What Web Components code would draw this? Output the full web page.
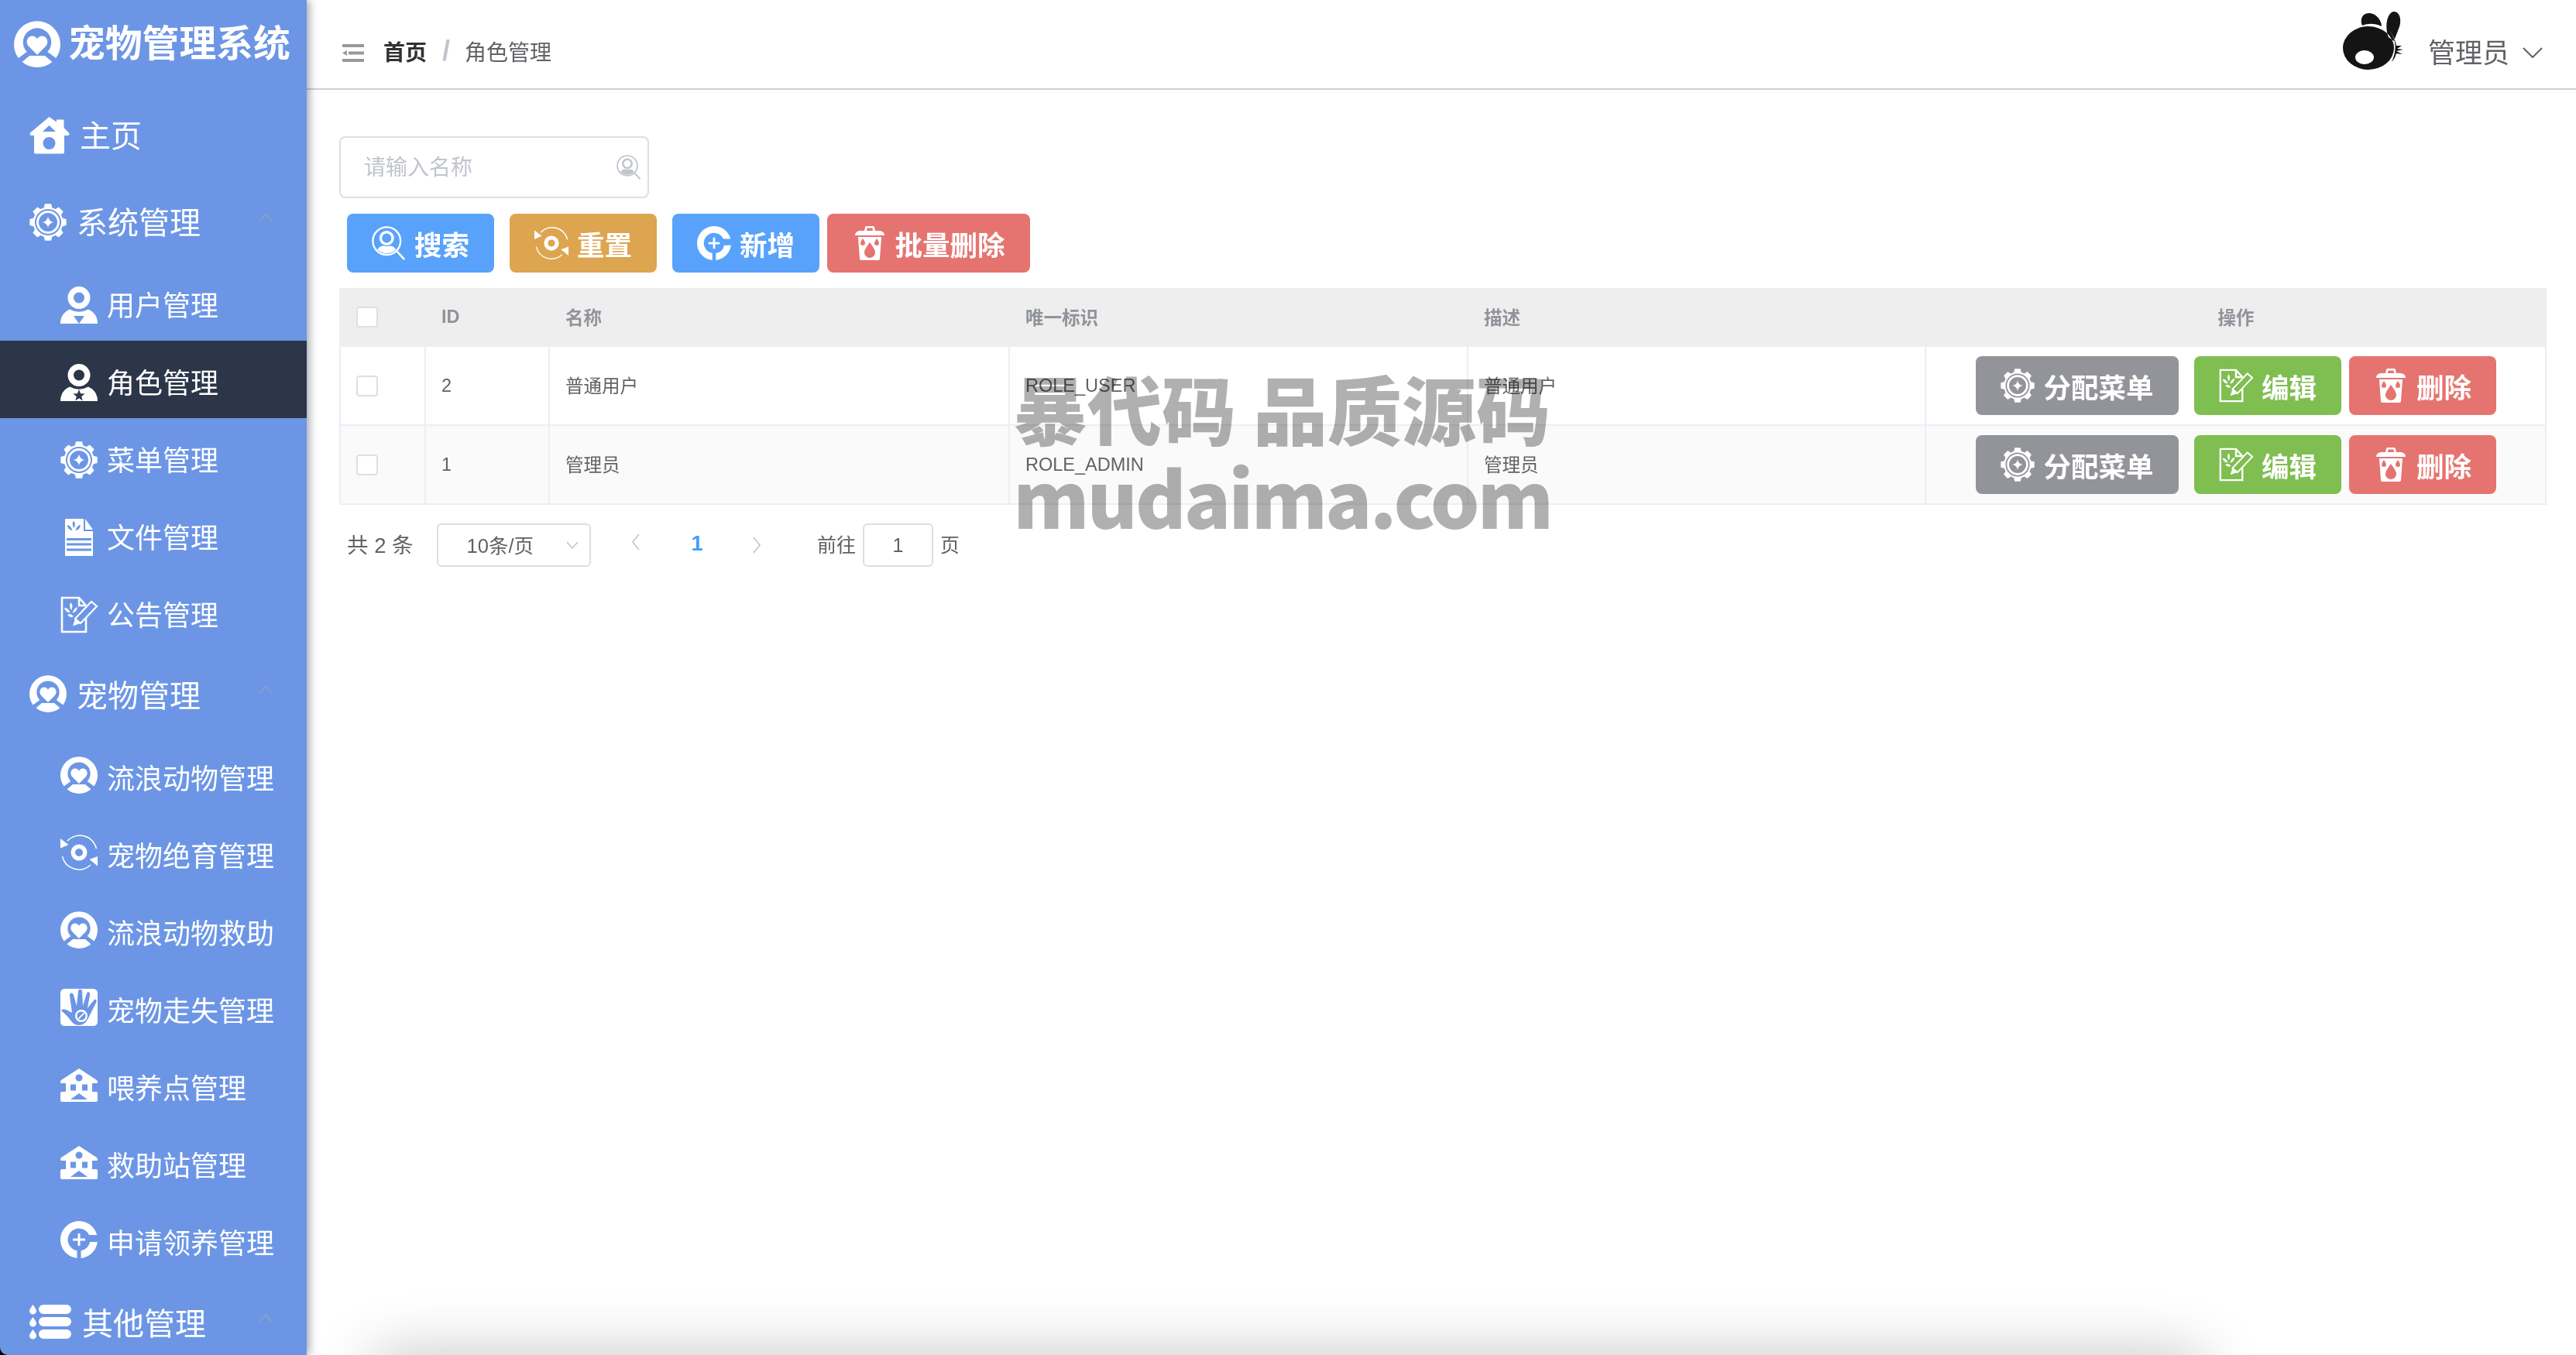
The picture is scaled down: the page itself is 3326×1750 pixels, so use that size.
<!DOCTYPE html>
<html lang="zh">
<head>
<meta charset="utf-8">
<title>宠物管理系统</title>
<style>
    html, body { margin: 0; height: 100%; overflow: hidden; background: #fff; }
    body { font-family: "Liberation Sans", "Noto Sans CJK SC", sans-serif; }
</style>
</head>
<body>
<pet-app>
    <side-nav slot="side" title="宠物管理系统">
        <nav-item icon="home" iw="52" ih="48" gap="13" top>主页</nav-item>
        <nav-item icon="gear" group style="height:109px;padding-top:3px">系统管理</nav-item>
        <nav-item icon="user" sub style="--nudge:4px">用户管理</nav-item>
        <nav-item icon="role" sub active style="--nudge:4px">角色管理</nav-item>
        <nav-item icon="gear" sub style="--nudge:4px">菜单管理</nav-item>
        <nav-item icon="file" sub style="--nudge:4px">文件管理</nav-item>
        <nav-item icon="edit" sub style="--nudge:4px">公告管理</nav-item>
        <nav-item icon="pet" group style="height:111px;--lift:0px">宠物管理</nav-item>
        <nav-item icon="pet" sub>流浪动物管理</nav-item>
        <nav-item icon="cycle" sub>宠物绝育管理</nav-item>
        <nav-item icon="pet" sub>流浪动物救助</nav-item>
        <nav-item icon="lost" sub>宠物走失管理</nav-item>
        <nav-item icon="shop" sub ih="43">喂养点管理</nav-item>
        <nav-item icon="shop" sub ih="43">救助站管理</nav-item>
        <nav-item icon="adopt" sub>申请领养管理</nav-item>
        <nav-item icon="list" iw="54" ih="45" gap="14" group style="height:112px;--lift:0px">其他管理</nav-item>
    </side-nav>

    <top-bar current="角色管理" user="管理员"></top-bar>

    <page-content>
        <search-box placeholder="请输入名称"></search-box>
        <tool-bar>
            <tool-button icon="search" color="#58a2fb" style="margin-right:10px">搜索</tool-button>
            <tool-button icon="cycle" color="#dda550" style="margin-right:10px">重置</tool-button>
            <tool-button icon="adopt" color="#58a2fb">新增</tool-button>
            <tool-button icon="trash" color="#e57470" style="width:262px">批量删除</tool-button>
        </tool-bar>
        <role-table>
            <role-row head></role-row>
            <role-row rid="2" name="普通用户" flag="ROLE_USER" desc="普通用户"></role-row>
            <role-row rid="1" name="管理员" flag="ROLE_ADMIN" desc="管理员" stripe></role-row>
        </role-table>
        <page-nav></page-nav>
    </page-content>

    <water-mark></water-mark>
</pet-app>

<script>
// icons are plain strings, <use> can't cross shadow roots
function gearPath() {
    let d = '';
    const teeth = 8;
    for (let i = 0; i < teeth; i++) {
        const a = (i / teeth) * Math.PI * 2 - Math.PI / 2;
        const pts = [[-0.27, 19.5], [-0.17, 24], [0.17, 24], [0.27, 19.5]];
        pts.forEach(([o, r]) => {
            const x = 24 + Math.cos(a + o) * r;
            const y = 24 + Math.sin(a + o) * r;
            d += (d ? 'L' : 'M') + x.toFixed(2) + ' ' + y.toFixed(2);
        });
    }
    return d + 'Z';
}

function circle(cx, cy, r) {
    return `M${cx - r} ${cy}a${r} ${r} 0 1 0 ${r * 2} 0a${r} ${r} 0 1 0 ${-r * 2} 0Z`;
}

function star(cx, cy, r) {
    let d = '';
    for (let i = 0; i < 10; i++) {
        const a = (i / 10) * Math.PI * 2 - Math.PI / 2;
        const rr = i % 2 ? r * 0.42 : r;
        d += (d ? 'L' : 'M') + (cx + Math.cos(a) * rr).toFixed(2) + ' ' + (cy + Math.sin(a) * rr).toFixed(2);
    }
    return d + 'Z';
}

const solid = d => `<path fill="currentColor" fill-rule="evenodd" d="${d}"/>`;
const line = (d, w) => `<path fill="none" stroke="currentColor" stroke-width="${w}" d="${d}"/>`;

const ICONS = {
    pet: ['0 0 48 48', solid(
        'M4.6 38.4A24 24 0 1 1 43.4 38.4L34.7 32A14.6 14.6 0 1 0 13.3 32Z' +
        'M8.5 42.3A24 24 0 0 0 39.5 42.3L32 36H16Z' +
        'M24 35L15 26C11.5 21.5 14 15.5 19 15.5C21.5 15.5 23 17 24 18.5C25 17 26.5 15.5 29 15.5C34 15.5 36.5 21.5 33 26Z')],
    home: ['0 0 52 48', solid(
        'M25.5 0L35 6.5V3.5H44.5V14L51 20.5C52.5 22.5 51 24 49 24H45V45.5Q45 47.5 43 47.5H8Q6 47.5 6 45.5V24H3C1 24 0 22.5 1 20.5Z' +
        'M25.5 11L17 19H34Z' + circle(25.5, 34, 8))],
    gear: ['0 0 48 48', solid(gearPath() + circle(24, 24, 17) + circle(24, 24, 15) + circle(24, 24, 12) +
        'M24 16.5Q25 23 31.5 24Q25 25 24 31.5Q23 25 16.5 24Q23 23 24 16.5Z')],
    user: ['0 0 48 48', solid(circle(24, 14.5, 14.5) + circle(24, 14.5, 7) +
        'M0 48Q0 35 12 29.5Q24 36 36 29.5Q48 35 48 48ZM17 38H31L24 48Z')],
    role: ['0 0 48 48', solid(circle(24, 14.5, 14.5) + circle(24, 14.5, 7) +
        'M0 48Q0 35 12 29.5Q24 36 36 29.5Q48 35 48 48Z' + star(24, 41, 8))],
    file: ['0 0 48 48', solid(
        'M6 0H30V16H42V48H6Z M32 0L42 14H32Z' +
        'M17 2.5Q20.5 6 17.5 12Q14 7 17 2.5ZM8.5 8Q13 8 15.5 15Q10 15 8.5 8ZM26 8Q21.5 8 19.5 15Q25 15 26 8Z' +
        'M8 25H40V28H8ZM8 31.5H40V34.5H8ZM8 38.5H40V41.5H8Z')],
    edit: ['0 0 48 48',
        line('M33 28V46H2V2H24L33 12M24 2V12H33', 2.6) +
        solid('M13.5 8Q17 12 14 18Q10.5 13 13.5 8ZM5 15Q10 14.5 12.5 21Q7 21.5 5 15ZM22 14Q18 14.5 15.5 21.5Q21 21 22 14ZM9 24Q13 21 17 26Q13 29 9 24Z') +
        line('M19 29L40 7L47 13L26 35Z', 2.2) + solid('M16 38.5L19 29L26 35Z')],
    cycle: ['0 0 48 48',
        solid(circle(24, 24, 10.5) + circle(24, 24, 5)) +
        line('M9 9A22 22 0 0 1 46.5 19M2.5 29A22 22 0 0 0 39 40', 1.5) +
        solid('M0 6V18.5L10.5 14ZM48 29V41.5L37.5 33Z')],
    lost: ['0 0 48 48', solid(
        'M6 0H42Q48 0 48 6V42Q48 48 42 48H6Q0 48 0 42V6Q0 0 6 0Z' +
        'M1 28C4 25 8 27 15 31L12 9C11 5 16 4 17 8L21 22L23 3C23 0 28 0 28 3L29 22L34 6C35 3 39 4 38 8L35 25L43 15C45 12 48 15 46 18L36 38C33 44 29 47 24 47C17 47 14 42 11 38C8 34 4 31 1 28Z' +
        circle(27, 35, 8) + circle(27, 35, 5.6) + 'M22.8 38L30 30.8L31.2 32L24 39.2Z')],
    shop: ['0 0 48 43', solid(
        'M24 0L47 15Q49 18 47 19H41V30H46Q48 30 48 32V41Q48 43 46 43H2Q0 43 0 41V32Q0 30 2 30H7V19H1Q-1 18 1 15Z' +
        circle(24, 12, 4.5) + 'M13 20.5H20V28.5H13ZM28 20.5H35V28.5H28ZM24 32L13 40H35Z')],
    adopt: ['0 0 48 48', solid(
        'M47.2 18A24 24 0 1 0 21.5 47.9V38.2A14.4 14.4 0 1 1 37 18Z' +
        'M26.5 47.9A24 24 0 0 0 47.8 27H38.2A14.4 14.4 0 0 1 26.5 38.2Z' +
        'M22.5 16H25.5V22.5H32V25.5H25.5V32H22.5V25.5H16V22.5H22.5Z')],
    list: ['0 0 54 45', solid(
        'M4.5 0Q9 6 9 8A4.5 4.5 0 0 1 0 8Q0 6 4.5 0ZM4.5 16Q9 22 9 24A4.5 4.5 0 0 1 0 24Q0 22 4.5 16ZM4.5 32Q9 38 9 40A4.5 4.5 0 0 1 0 40Q0 38 4.5 32Z' +
        'M18 0H48A6 6 0 0 1 48 12H18A6 6 0 0 1 18 0ZM18 16H48A6 6 0 0 1 48 28H18A6 6 0 0 1 18 16ZM18 32H48A6 6 0 0 1 48 44H18A6 6 0 0 1 18 32Z')],
    search: ['0 0 48 48',
        line(circle(21, 21, 19.5), 2.6) + line(circle(21, 17, 8.5), 3.8) +
        solid('M8 33Q12 26 21 28.5Q30 26 34 33Q28 38.5 21 38.5Q14 38.5 8 33Z') + line('M35 35L46 47', 2.8)],
    trash: ['0 0 38 44', solid(
        'M0 12Q0 7 6 6H12L13 1.5Q13 0 15 0H23Q25 0 25 1.5L26 6H32Q38 7 38 12ZM15.5 2.5L15 6H23L22.5 2.5Z' +
        'M4 14H34L32 42Q32 44 30 44H8Q6 44 6 42Z' +
        'M19 21Q26 30 26 34A7 7 0 0 1 12 34Q12 30 19 21Z' +
        'M10 16Q13 20 13 22A3 3 0 0 1 7 22Q7 20 10 16ZM28 16Q31 20 31 22A3 3 0 0 1 25 22Q25 20 28 16Z')],
    fold: ['0 0 28 23', solid('M0 0H28V4H0ZM8 9.5H28V13.5H8ZM0 11.5L6 8V15ZM0 19H28V23H0Z')],
    rabbit: ['0 0 78 76', solid(
        'M25 18C21 8 27 1 35 2C44 3 50 12 50 19C41 15 33 15 25 18Z' +
        'M59 33C54 22 56 3 65 0C75 -1 76 14 72 22C70 28 68 32 66 38Z' +
        'M33 19A33 28 0 1 1 33 75A33 28 0 1 1 33 19Z' +
        'M28 50A12 9 0 1 1 28 68A12 9 0 1 1 28 50Z' +
        'M60 25C69 35 70 50 63 65C66 62 68 58 69 54L77 55L69 51L78 49L70 48L76 44L69 44C68 38 65 30 60 25Z')]
};

class PetIcon extends HTMLElement {
    connectedCallback() {
        const [box, body] = ICONS[this.getAttribute('name')];
        const w = this.getAttribute('w') || 48;
        const h = this.getAttribute('h') || 48;
        this.attachShadow({ mode: 'open' }).innerHTML = `
            <style>
                :host { display: inline-flex; flex: none; width: ${w}px; height: ${h}px; color: inherit; }
                svg { width: 100%; height: 100%; display: block; overflow: visible; }
            </style>
            <svg viewBox="${box}">${body}</svg>`;
    }
}
customElements.define('pet-icon', PetIcon);

class PetApp extends HTMLElement {
    constructor() {
        super();
        this.attachShadow({ mode: 'open' }).innerHTML = `
            <style>
                :host { display: flex; height: 1750px; width: 3326px; position: relative; overflow: hidden; background: #000; }
                .side { flex: none; display: flex; position: relative; z-index: 2; }
                .main { flex: 1; min-width: 0; background: #fff; display: flex; flex-direction: column; }
            </style>
            <div class="side"><slot name="side"></slot></div>
            <div class="main"><slot></slot></div>`;
    }
}
customElements.define('pet-app', PetApp);

class SideNav extends HTMLElement {
    connectedCallback() {
        this.attachShadow({ mode: 'open' }).innerHTML = `
            <style>
                :host {
                    display: block; width: 396px; height: 1750px; overflow: hidden;
                    background: #6c96e5; color: #fff;
                    border-bottom-left-radius: 10px;
                    box-shadow: 3px 0 12px rgba(0, 21, 41, 0.4);
                }
                .logo {
                    height: 119px; padding-left: 18px; box-sizing: border-box;
                    display: flex; align-items: center; gap: 10px;
                    font-size: 47.8px; font-weight: 700; white-space: nowrap;
                    padding-bottom: 6px;
                }
                .logo span { position: relative; top: -4px; }
            </style>
            <div class="logo"><pet-icon name="pet" w="60" h="60"></pet-icon><span>${this.getAttribute('title')}</span></div>
            <slot></slot>`;
    }
}
customElements.define('side-nav', SideNav);

class NavItem extends HTMLElement {
    connectedCallback() {
        const sub = this.hasAttribute('sub');
        const group = this.hasAttribute('group');
        const iw = this.getAttribute('iw') || 48;
        const ih = this.getAttribute('ih') || 48;
        const gap = this.getAttribute('gap') || (sub ? 12 : 13);
        this.attachShadow({ mode: 'open' }).innerHTML = `
            <style>
                :host {
                    display: flex; align-items: center; box-sizing: border-box; position: relative;
                    height: ${sub ? 100 : 112}px; padding-left: ${sub ? 78 : 38}px; gap: ${gap}px;
                    font-size: ${sub ? 36 : 40}px; white-space: nowrap;
                    background: ${this.hasAttribute('active') ? '#2b3648' : 'transparent'};
                }
                span { position: relative; top: ${sub ? '2px' : 'calc(0px - var(--lift, 2px))'}; }
                pet-icon { position: relative; top: var(--nudge, 0px); }
                svg.up { position: absolute; right: 44px; top: 50%; margin-top: -10px; width: 18px; height: 10px; }
            </style>
            <pet-icon name="${this.getAttribute('icon')}" w="${iw}" h="${ih}"></pet-icon>
            <span><slot></slot></span>
            ${group ? '<svg class="up" viewBox="0 0 18 10"><path d="M1 9.5L9 1L17 9.5" fill="none" stroke="#98a2b3" stroke-width="1.2"/></svg>' : ''}`;
    }
}
customElements.define('nav-item', NavItem);

class TopBar extends HTMLElement {
    connectedCallback() {
        this.attachShadow({ mode: 'open' }).innerHTML = `
            <style>
                :host {
                    display: flex; align-items: center; flex: none; height: 116px; box-sizing: border-box;
                    border-bottom: 2px solid #d0d0d0; padding: 0 43px 0 46px;
                }
                .fold { color: #999; margin-right: 25px; margin-top: 23px; }
                .crumb { display: flex; align-items: center; font-size: 28px; color: #606266; margin-top: 17px; }
                .crumb b { color: #303133; font-weight: 700; }
                .crumb i { font-style: normal; font-weight: 700; font-size: 36px; line-height: 1; color: #c0c4cc; margin: 0 19px 0 20px; }
                .right { margin-left: auto; display: flex; align-items: center; color: #606266; }
                .right span { font-size: 35px; margin: 17px 17px 0 32px; }
                svg.down { width: 26px; height: 14px; margin-top: 22px; }
                .avatar { color: #141414; margin-top: -8px; }
            </style>
            <pet-icon class="fold" name="fold" w="28" h="23"></pet-icon>
            <div class="crumb"><b>首页</b><i>/</i><span>${this.getAttribute('current')}</span></div>
            <div class="right">
                <pet-icon class="avatar" name="rabbit" w="78" h="76"></pet-icon>
                <span>${this.getAttribute('user')}</span>
                <svg class="down" viewBox="0 0 26 14"><path d="M1 1L13 13L25 1" fill="none" stroke="#606266" stroke-width="2"/></svg>
            </div>`;
    }
}
customElements.define('top-bar', TopBar);

class PageContent extends HTMLElement {
    constructor() {
        super();
        this.attachShadow({ mode: 'open' }).innerHTML = `
            <style>
                :host { display: flex; flex-direction: column; align-items: stretch; padding: 60px 38px 0 42px; flex: 1; position: relative; }
                /* shadow of a card that sits just under the fold */
                .under {
                    position: absolute; left: 87px; width: 2359px; top: 1634px; height: 80px;
                    box-shadow: 0 0 80px rgba(0, 0, 0, 0.24);
                }
            </style>
            <slot></slot>
            <div class="under"></div>`;
    }
}
customElements.define('page-content', PageContent);

class SearchBox extends HTMLElement {
    connectedCallback() {
        this.attachShadow({ mode: 'open' }).innerHTML = `
            <style>
                :host {
                    display: flex; align-items: center; justify-content: space-between; box-sizing: border-box;
                    width: 400px; height: 80px; padding: 0 8px 0 30px;
                    border: 2px solid #dcdfe6; border-radius: 8px;
                    font-size: 28px; color: #c0c4cc; margin-bottom: 20px;
                }
                span { position: relative; top: -2px; }
            </style>
            <span>${this.getAttribute('placeholder')}</span>
            <pet-icon name="search" w="32" h="32"></pet-icon>`;
    }
}
customElements.define('search-box', SearchBox);

class ToolBar extends HTMLElement {
    constructor() {
        super();
        this.attachShadow({ mode: 'open' }).innerHTML = `
            <style>:host { display: flex; gap: 10px; padding-left: 10px; margin-bottom: 20px; }</style>
            <slot></slot>`;
    }
}
customElements.define('tool-bar', ToolBar);

class ToolButton extends HTMLElement {
    connectedCallback() {
        this.attachShadow({ mode: 'open' }).innerHTML = `
            <style>
                :host {
                    display: inline-flex; align-items: center; justify-content: center; gap: 11px; height: 76px; padding: 0 32px;
                    box-sizing: border-box; border-radius: 8px; flex: none;
                    background: ${this.getAttribute('color')}; color: #fff;
                    font-size: 35.5px; font-weight: 700; white-space: nowrap;
                }
            </style>
            <pet-icon name="${this.getAttribute('icon')}" w="44" h="44"></pet-icon>
            <span><slot></slot></span>`;
    }
}
customElements.define('tool-button', ToolButton);

class RoleTable extends HTMLElement {
    constructor() {
        super();
        this.attachShadow({ mode: 'open' }).innerHTML = `
            <style>
                :host { display: block; width: 2850px; box-sizing: border-box; border-left: 2px solid #ebeef5; border-right: 2px solid #ebeef5; }
            </style>
            <slot></slot>`;
    }
}
customElements.define('role-table', RoleTable);

class RoleRow extends HTMLElement {
    connectedCallback() {
        const head = this.hasAttribute('head');
        const cells = head
            ? ['ID', '名称', '唯一标识', '描述']
            : [this.getAttribute('rid'), this.getAttribute('name'), this.getAttribute('flag'), this.getAttribute('desc')];
        const ops = head ? '<span>操作</span>' : `
            <tool-button icon="gear" color="#939499" style="margin-right:10px;width:262px">分配菜单</tool-button>
            <tool-button icon="edit" color="#7fbe50">编辑</tool-button>
            <tool-button icon="trash" color="#e57470">删除</tool-button>`;
        // CJK cells sit a little lower than the latin ones in this font
        const cell = t => `<div class="c${!head && /[^\x00-\x7f]/.test(t) ? ' cjk' : ''}">${t}</div>`;
        this.attachShadow({ mode: 'open' }).innerHTML = `
            <style>
                :host {
                    display: grid; grid-template-columns: 110px 160px 594px 592px 591px 1fr;
                    height: ${head ? 76 : 102}px; box-sizing: border-box;
                    background: ${head ? '#eeeeef' : this.hasAttribute('stripe') ? '#fafafa' : '#fff'};
                    border-bottom: 2px solid #ebeef5;
                    font-size: 23.5px; color: ${head ? '#909399' : '#606266'}; font-weight: ${head ? 700 : 400};
                }
                .c { display: flex; align-items: center; padding-left: 20px; border-right: 2px solid ${head ? '#eeeeef' : '#ebeef5'}; box-sizing: border-box; min-width: 0; white-space: nowrap; }
                .c:first-child { padding-left: 21px; }
                .cjk { padding-bottom: 3px; }
                .ops { border: 0; padding: 0 0 0 1px; justify-content: center; gap: 10px; }
                .box { width: 28px; height: 27px; box-sizing: border-box; background: #fff; border: 2px solid #dcdfe6; border-radius: 4px; }
            </style>
            <div class="c"><div class="box"></div></div>
            ${cells.map(cell).join('')}
            <div class="c ops">${ops}</div>`;
    }
}
customElements.define('role-row', RoleRow);

class PageNav extends HTMLElement {
    constructor() {
        super();
        const arrow = d => `<svg width="12" height="22" viewBox="0 0 12 22"><path d="${d}" fill="none" stroke="#c0c4cc" stroke-width="1.6"/></svg>`;
        this.attachShadow({ mode: 'open' }).innerHTML = `
            <style>
                :host { display: flex; align-items: center; height: 56px; margin-top: 24px; padding-left: 10px; font-size: 27.5px; color: #606266; white-space: nowrap; }
                span { position: relative; top: -2px; }
                .sel {
                    display: flex; align-items: center; box-sizing: border-box; width: 199px; height: 56px;
                    margin-left: 30px; padding-left: 37px; border: 2px solid #dcdfe6; border-radius: 6px; font-size: 25.5px;
                }
                .sel svg { margin-left: 42px; }
                .cur { color: #409eff; font-weight: 700; margin: 0 63px 0 66px; }
                .prev { margin-left: 52px; }
                .go { margin-left: 72px; font-size: 25px; }
                .num {
                    display: flex; align-items: center; justify-content: center; box-sizing: border-box; font-size: 25px;
                    width: 91px; height: 56px; margin: 0 9px; border: 2px solid #dcdfe6; border-radius: 6px;
                }
                .unit { font-size: 25px; }
            </style>
            <span>共 2 条</span>
            <div class="sel"><span>10条/页</span><svg width="16" height="10" viewBox="0 0 16 10"><path d="M1 1L8 9L15 1" fill="none" stroke="#c0c4cc" stroke-width="1.5"/></svg></div>
            <span class="prev">${arrow('M10 1L2 11L10 21')}</span>
            <span class="cur">1</span>
            ${arrow('M2 1L10 11L2 21')}
            <span class="go">前往</span>
            <div class="num">1</div>
            <span class="unit">页</span>`;
    }
}
customElements.define('page-nav', PageNav);

// overlaid stamp on top of the page, blended so the table shows through
class WaterMark extends HTMLElement {
    constructor() {
        super();
        this.attachShadow({ mode: 'open' }).innerHTML = `
            <style>
                :host {
                    position: absolute; left: 1308px; top: 458px; z-index: 3; pointer-events: none;
                    color: #b0b0b0; mix-blend-mode: multiply; white-space: nowrap; font-weight: 900;
                    font-family: "Noto Sans CJK SC", sans-serif;
                }
                .a { font-size: 96px; line-height: 136px; }
                .b { font-size: 100px; line-height: 100px; margin-top: -4px; letter-spacing: -3px; }
            </style>
            <div class="a">暴代码 品质源码</div>
            <div class="b">mudaima.com</div>`;
    }
}
customElements.define('water-mark', WaterMark);
</script>
</body>
</html>
